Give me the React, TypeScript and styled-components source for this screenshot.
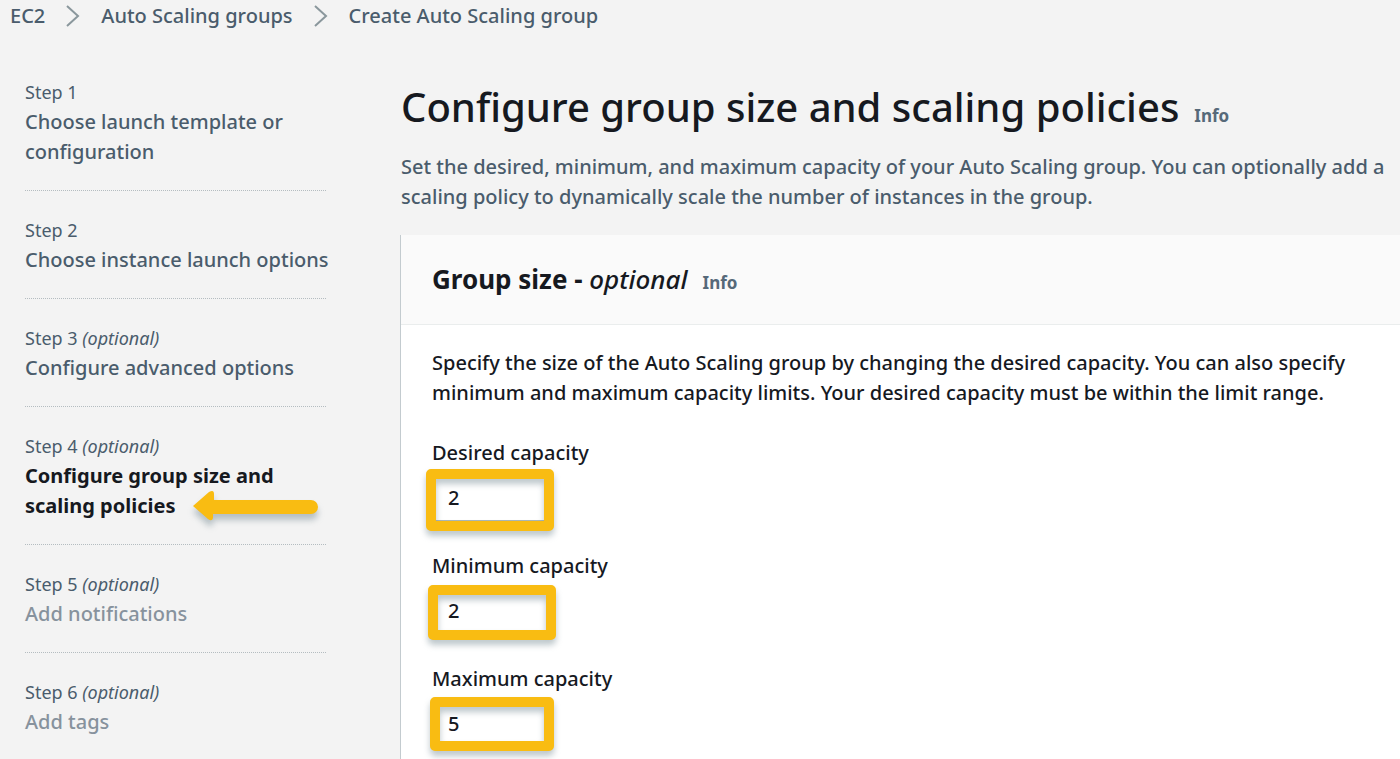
import React from 'react';
import styled, { createGlobalStyle } from 'styled-components';

const GlobalStyle = createGlobalStyle`
  * { box-sizing: border-box; }
  body {
    margin: 0;
    background: #f3f3f3;
    color: #16191f;
    font-family: 'Noto Sans', 'Open Sans', sans-serif;
    font-size: 20px;
    font-weight: 500;
    line-height: 30px;
  }
`;

const Page = styled.div`
  min-height: 100vh;
  overflow-x: hidden;
`;

const Breadcrumbs = styled.nav`
  display: flex;
  align-items: center;
  gap: 21px;
  height: 32px;
  padding: 0 10px;
`;

const Crumb = styled.a`
  color: #4a5c6c;
  text-decoration: none;
  white-space: nowrap;
`;

const Chevron = styled.svg`
  width: 14px;
  height: 24px;
  flex: none;
  fill: none;
  stroke: #8a979c;
  stroke-width: 2;
`;

const Columns = styled.div`
  display: grid;
  grid-template-columns: 301px minmax(0, 1fr);
  column-gap: 74px;
  padding: 45px 0 0 25px;
`;

const Steps = styled.ol`
  list-style: none;
  margin: 0;
  padding: 0;
`;

const Step = styled.li`
  padding-bottom: 23px;
  border-bottom: 1px dotted #b4bcc0;

  & + & { padding-top: 24px; }
  &:last-child { border-bottom: 0; }
`;

const StepLabel = styled.div`
  font-size: 18px;
  font-weight: 400;
  color: #4a5c6c;
`;

const StepTitle = styled.a<{ $state: 'done' | 'current' | 'next' }>`
  display: block;
  position: relative;
  text-decoration: none;
  white-space: nowrap;
  font-weight: ${(p) => (p.$state === 'current' ? 700 : 500)};
  color: ${(p) => ({ done: '#4a5c6c', current: '#16191f', next: '#87929d' })[p.$state]};
`;

const Arrow = styled.svg`
  position: absolute;
  left: 162px;
  bottom: -13px;
  width: 140px;
  height: 48px;
  overflow: visible;
  fill: #f9bc12;
  filter: drop-shadow(0 6px 3px rgba(90, 115, 125, 0.4));
`;

const Main = styled.main`
  display: flex;
  flex-direction: column;
`;

const Intro = styled.header`
  display: flex;
  flex-direction: column;
  gap: 15px;
  padding: 0 0 23px 1px;
`;

const TitleRow = styled.div`
  display: flex;
  align-items: baseline;
  gap: 15px;
  white-space: nowrap;
`;

const Title = styled.h1`
  margin: 0;
  font-size: 40px;
  line-height: 60px;
  font-weight: 500;
`;

const Info = styled.a`
  font-size: 17px;
  font-weight: 700;
  color: #566979;
  text-decoration: none;
`;

const Text = styled.p<{ $muted?: boolean }>`
  margin: 0;
  color: ${(p) => (p.$muted ? '#4a5c6c' : '#16191f')};
`;

const Panel = styled.section`
  flex: 1;
  background: #fff;
  border-left: 1px solid #c3cbcf;
`;

const PanelHeader = styled.div`
  display: flex;
  align-items: baseline;
  gap: 15px;
  padding: 26px 31px;
  background: #fafafa;
  border-bottom: 1px solid #eaeded;
`;

const PanelTitle = styled.h2`
  margin: 0;
  font-size: 26px;
  line-height: 36px;
  font-weight: 700;

  em { font-weight: 500; }
`;

const PanelBody = styled.div`
  display: flex;
  flex-direction: column;
  gap: 30px;
  padding: 23px 31px 14px;
`;

const Field = styled.div`
  position: relative;
  display: flex;
  flex-direction: column;
  align-items: flex-start;
  gap: 8px;
`;

const NumberInput = styled.input`
  width: 116px;
  height: 45px;
  padding: 0 15px 3px;
  border: 1px solid #aab7b8;
  background: #fff;
  color: #16191f;
  font: inherit;
  outline: 0;
`;

const Highlight = styled.span<{ $x: number; $y: number; $w: number; $h: number }>`
  position: absolute;
  left: ${(p) => p.$x}px;
  top: ${(p) => p.$y}px;
  width: ${(p) => p.$w}px;
  height: ${(p) => p.$h}px;
  border: 10px solid #f9bc12;
  border-radius: 5px;
  filter: drop-shadow(0 5px 3px rgba(90, 115, 125, 0.4));
  pointer-events: none;
`;

type StepData = { title: React.ReactNode; optional?: boolean; state: 'done' | 'current' | 'next' };

const steps: StepData[] = [
  { title: <>Choose launch template or<br />configuration</>, state: 'done' },
  { title: 'Choose instance launch options', state: 'done' },
  { title: 'Configure advanced options', optional: true, state: 'done' },
  { title: <>Configure group size and<br />scaling policies</>, optional: true, state: 'current' },
  { title: 'Add notifications', optional: true, state: 'next' },
  { title: 'Add tags', optional: true, state: 'next' },
];

const fields = [
  { id: 'desired', label: 'Desired capacity', value: '2', frame: [-6, 31, 128, 62] },
  { id: 'minimum', label: 'Minimum capacity', value: '2', frame: [-4, 34, 128, 55] },
  { id: 'maximum', label: 'Maximum capacity', value: '5', frame: [-2, 33, 124, 54] },
];

const crumbs = ['EC2', 'Auto Scaling groups', 'Create Auto Scaling group'];

export default function App() {
  return (
    <Page>
      <GlobalStyle />
      <Breadcrumbs aria-label="Breadcrumbs">
        {crumbs.map((crumb, i) => (
          <React.Fragment key={crumb}>
            {i > 0 && (
              <Chevron viewBox="0 0 14 24" aria-hidden="true">
                <path d="M1 2 L12 12 L1 22" />
              </Chevron>
            )}
            <Crumb href="#">{crumb}</Crumb>
          </React.Fragment>
        ))}
      </Breadcrumbs>
      <Columns>
        <Steps>
          {steps.map((step, i) => (
            <Step key={i}>
              <StepLabel>
                Step {i + 1} {step.optional && <em>(optional)</em>}
              </StepLabel>
              <StepTitle href="#" $state={step.state}>
                {step.title}
                {step.state === 'current' && (
                  <Arrow viewBox="0 0 140 48" aria-hidden="true">
                    <path d="M6 20 L22 6 Q27 3 27 8 L27 14 H124 A7 7 0 0 1 124 28 H26 L26 32 Q25 36 21 33 Z" />
                  </Arrow>
                )}
              </StepTitle>
            </Step>
          ))}
        </Steps>
        <Main>
          <Intro>
            <TitleRow>
              <Title>Configure group size and scaling policies</Title>
              <Info href="#">Info</Info>
            </TitleRow>
            <Text $muted>
              Set the desired, minimum, and maximum capacity of your Auto Scaling group. You can optionally add a
              scaling policy to dynamically scale the number of instances in the group.
            </Text>
          </Intro>
          <Panel>
            <PanelHeader>
              <PanelTitle>
                Group size - <em>optional</em>
              </PanelTitle>
              <Info href="#">Info</Info>
            </PanelHeader>
            <PanelBody>
              <Text>
                Specify the size of the Auto Scaling group by changing the desired capacity. You can also specify
                minimum and maximum capacity limits. Your desired capacity must be within the limit range.
              </Text>
              {fields.map(({ id, label, value, frame: [x, y, w, h] }) => (
                <Field key={id}>
                  <label htmlFor={id}>{label}</label>
                  <NumberInput id={id} inputMode="numeric" defaultValue={value} />
                  <Highlight $x={x} $y={y} $w={w} $h={h} />
                </Field>
              ))}
            </PanelBody>
          </Panel>
        </Main>
      </Columns>
    </Page>
  );
}
